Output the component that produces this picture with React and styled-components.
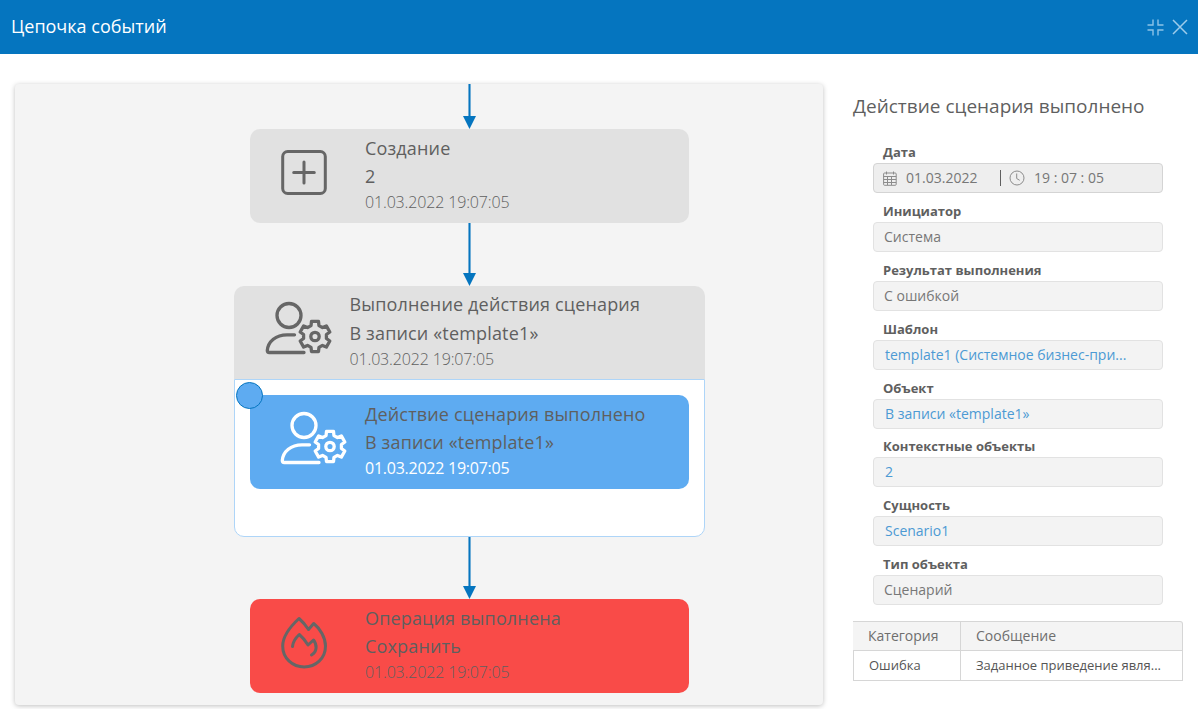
import React from "react";
import styled, { createGlobalStyle } from "styled-components";

const GlobalStyle = createGlobalStyle`
  *, *::before, *::after { box-sizing: border-box; }
  body {
    margin: 0;
    background: #fff;
    color: #5f5f5f;
    font-family: "Open Sans", "Noto Sans", sans-serif;
    overflow: hidden;
  }
`;

const Window = styled.div`
  display: flex;
  flex-direction: column;
  width: 1198px;
  height: 709px;
`;

const TitleBar = styled.header`
  display: flex;
  align-items: center;
  flex: none;
  height: 54px;
  padding: 0 10px 0 11px;
  background: #0575bf;
  color: #fff;
`;

const WindowTitle = styled.h1`
  flex: 1;
  margin: 0;
  padding-bottom: 2px;
  font-size: 18px;
  line-height: 26px;
  font-weight: 400;
`;

const WindowTools = styled.div`
  display: flex;
  align-items: center;
  gap: 8px;
  svg { display: block; }
`;

const Body = styled.main`
  display: flex;
  flex: 1;
  min-height: 0;
  padding: 29px 15px 4px;
  gap: 30px;
`;

const Canvas = styled.section`
  display: flex;
  flex-direction: column;
  align-items: center;
  flex: none;
  width: 808px;
  height: 621px;
  margin-top: 1px;
  padding-left: 101px;
  border-radius: 4px;
  background: #f4f4f4;
  box-shadow: 0 1px 5px rgba(0, 0, 0, 0.25);
`;

const Connector = styled.div`
  display: flex;
  flex-direction: column;
  align-items: center;
  flex: none;
  height: ${(p) => p.$length}px;
  &::before {
    content: "";
    flex: 1;
    width: 3px;
    border: solid rgba(5, 117, 191, 0.55);
    border-width: 0 1px;
    background: #0575bf;
    background-clip: padding-box;
  }
  &::after {
    content: "";
    width: 13px;
    height: 13px;
    background: #0575bf;
    clip-path: polygon(0 0, 100% 0, 50% 100%);
  }
`;

const tones = {
  plain: { bg: "#e1e1e1", icon: "#666", date: "#5f5f5f", weight: 300, spacing: -0.15 },
  active: { bg: "#5eabf1", icon: "#fff", date: "#fff", weight: 400, spacing: -0.25 },
  error: { bg: "#f94b48", icon: "#666", date: "#5f5f5f", weight: 300, spacing: -0.15 },
};

const Node = styled.article`
  display: flex;
  flex: none;
  width: ${(p) => (p.$header ? 471 : 439)}px;
  height: ${(p) => (p.$header ? 93 : 94)}px;
  padding: ${(p) => (p.$header ? "4px 0 0 25.5px" : "5px 0 0 25px")};
  border-radius: ${(p) => (p.$header ? "10px 10px 0 0" : "10px")};
  background: ${(p) => tones[p.$tone].bg};
  color: ${(p) => tones[p.$tone].icon};
`;

const NodeIcon = styled.div`
  flex: none;
  width: 90px;
  padding-top: 5px;
  svg { display: block; }
`;

const NodeText = styled.div`
  color: #5f5f5f;
  white-space: nowrap;
`;

const NodeLine = styled.div`
  font-size: 18px;
  line-height: 28px;
  letter-spacing: 0.16px;
  margin-top: ${(p) => (p.$spaced ? 1 : 0)}px;
`;

const NodeDate = styled.time`
  display: block;
  font-size: 16px;
  line-height: 25px;
  letter-spacing: ${(p) => tones[p.$tone].spacing}px;
  font-weight: ${(p) => tones[p.$tone].weight};
  color: ${(p) => tones[p.$tone].date};
`;

const Group = styled.div`
  flex: none;
  width: 471px;
  height: 251px;
`;

const GroupBody = styled.div`
  position: relative;
  height: 158px;
  padding: 15px 15px 0;
  border: 1px solid #aed5f8;
  border-radius: 0 0 10px 10px;
  background: #fff;
`;

const Marker = styled.span`
  position: absolute;
  left: 1px;
  top: 2px;
  width: 27px;
  height: 27px;
  border: 1px solid #0575bf;
  border-radius: 50%;
  background: #5eabf1;
`;

const Details = styled.aside`
  display: flex;
  flex-direction: column;
  width: 330px;
`;

const DetailsTitle = styled.h2`
  flex: none;
  height: 60px;
  margin: 0;
  padding-top: 9px;
  font-size: 19px;
  line-height: 28px;
  font-weight: 400;
  white-space: nowrap;
`;

const FieldList = styled.div`
  display: flex;
  flex-direction: column;
  padding: 0 20px;
`;

const Field = styled.div`
  flex: none;
  height: 58.88px;
`;

const Label = styled.div`
  height: 20px;
  padding-left: 10px;
  font-size: 13px;
  line-height: 19px;
  font-weight: 700;
`;

const Value = styled.div`
  display: flex;
  align-items: center;
  height: 30px;
  padding: 0 ${(p) => (p.$link ? 11 : p.$date ? 9 : 10)}px;
  border: 1px solid ${(p) => (p.$date ? "#d4d4d4" : "#e2e2e2")};
  border-radius: 4px;
  background: ${(p) => (p.$date ? "#eee" : "#f3f3f3")};
  color: ${(p) => (p.$link ? "#4c9ad4" : "#777")};
  font-size: 14px;
  line-height: 20px;
  white-space: nowrap;
`;

const DateText = styled.span`
  width: 94px;
  margin-left: 9px;
`;

const TimeText = styled.span`
  margin-left: 9px;
`;

const Divider = styled.span`
  width: 1px;
  height: 16px;
  margin-right: 8px;
  background: #5f5f5f;
`;

const Table = styled.div`
  display: grid;
  grid-template-columns: 108px 222px;
  margin-top: 6.9px;
`;

const Cell = styled.div`
  height: 30px;
  padding-left: 15px;
  border: solid #d6d6d6;
  border-width: ${(p) => (p.$head ? "1px 1px 1px 0" : "0 1px 1px 0")};
  border-left-width: ${(p) => (p.$first && !p.$head ? "1px" : "0")};
  border-top-right-radius: ${(p) => (p.$head && !p.$first ? "3px" : "0")};
  background: ${(p) => (p.$head ? "#f4f4f4" : "#fff")};
  font-size: ${(p) => (p.$head ? 14 : 13)}px;
  line-height: ${(p) => (p.$head ? 28 : 29)}px;
  color: ${(p) => (p.$head ? "#6e6e6e" : "#555")};
  white-space: nowrap;
`;

const PlusIcon = () => (
  <svg width="80" height="70" viewBox="0 0 80 70" fill="none" stroke="currentColor" strokeWidth="3" strokeLinecap="round">
    <rect x="7.7" y="12.5" width="42.6" height="42" rx="5" />
    <path d="M29 23v21M18.7 33.5h20.6" />
  </svg>
);

const gearPath = (cx, cy, outer, inner) => {
  const points = [];
  for (let i = 0; i < 6; i += 1) {
    [[-20, inner], [-13, outer], [13, outer], [20, inner]].forEach(([offset, r]) => {
      const a = ((i * 60 - 90 + offset) * Math.PI) / 180;
      points.push(`${(cx + r * Math.cos(a)).toFixed(2)} ${(cy + r * Math.sin(a)).toFixed(2)}`);
    });
  }
  return `M${points.join("L")}Z`;
};

const UserGearIcon = () => (
  <svg width="80" height="70" viewBox="0 0 80 70" fill="none" stroke="currentColor" strokeWidth="3.3" strokeLinecap="round" strokeLinejoin="round">
    <circle cx="29" cy="20.5" r="12" />
    <path d="M34.5 39.8H27C16 39.8 8 46.5 7.3 55.5Q7.3 57.5 9.3 57.5H44" />
    <path d={gearPath(55, 41.5, 15.5, 11.6)} />
    <circle cx="55" cy="41.5" r="4.2" />
  </svg>
);

const FlameIcon = () => (
  <svg width="80" height="70" viewBox="0 0 80 70" fill="none" stroke="currentColor" strokeWidth="3" strokeLinecap="round" strokeLinejoin="round">
    <path d="M24 9.5C17 16 7.7 26.5 7.7 37C7.7 49.5 17.7 58 29.2 58S50.5 49.5 50.5 37C50.5 28.5 45 19.5 38.7 14.5L33.5 20.5C30.5 16 27.5 12.5 24 9.5Z" />
    <path d="M17.5 37.5C18 32.5 20.5 29 24.3 25.5C28 28.5 30.5 32 33 36L38.5 31C42 35.5 42.5 42.5 36.5 46" />
  </svg>
);

const CollapseIcon = () => (
  <svg width="17" height="17" viewBox="0 0 17 17" fill="none" stroke="#8cc3e8" strokeWidth="1.4">
    <path d="M6 .5V6H.5M11 .5V6h5.5M6 16.5V11H.5M11 16.5V11h5.5" />
  </svg>
);

const CloseIcon = () => (
  <svg width="16" height="16" viewBox="0 0 16 16" fill="none" stroke="#9dcbea" strokeWidth="1.5">
    <path d="M1 1l14 14M15 1L1 15" />
  </svg>
);

const CalendarIcon = () => (
  <svg width="14" height="15" viewBox="0 0 14 15" fill="none" stroke="#8c8c8c">
    <rect x=".6" y="2" width="12.6" height="12.3" rx="1" />
    <path d="M.6 5.5h12.6M.6 8.5h12.6M.6 11.5h12.6M4.5 5.5v8.5M8.5 5.5v8.5M3.5.5v3M10.5.5v3" />
  </svg>
);

const ClockIcon = () => (
  <svg width="16" height="16" viewBox="0 0 16 16" fill="none" stroke="#8c8c8c">
    <circle cx="8" cy="8" r="7" />
    <path d="M7.7 3.5v5l3 1.8" />
  </svg>
);

const EventNode = ({ tone = "plain", header, icon, title, subject }) => (
  <Node $tone={tone} $header={header}>
    <NodeIcon>{icon}</NodeIcon>
    <NodeText>
      <NodeLine>{title}</NodeLine>
      <NodeLine $spaced={header}>{subject}</NodeLine>
      <NodeDate $tone={tone}>01.03.2022 19:07:05</NodeDate>
    </NodeText>
  </Node>
);

const fields = [
  { label: "Инициатор", value: "Система" },
  { label: "Результат выполнения", value: "С ошибкой" },
  { label: "Шаблон", value: "template1 (Системное бизнес-при...", link: true },
  { label: "Объект", value: "В записи «template1»", link: true },
  { label: "Контекстные объекты", value: "2", link: true },
  { label: "Сущность", value: "Scenario1", link: true },
  { label: "Тип объекта", value: "Сценарий" },
];

export default function App() {
  return (
    <Window>
      <GlobalStyle />
      <TitleBar>
        <WindowTitle>Цепочка событий</WindowTitle>
        <WindowTools>
          <CollapseIcon />
          <CloseIcon />
        </WindowTools>
      </TitleBar>
      <Body>
        <Canvas>
          <Connector $length={45} />
          <EventNode icon={<PlusIcon />} title="Создание" subject="2" />
          <Connector $length={63} />
          <Group>
            <EventNode header icon={<UserGearIcon />} title="Выполнение действия сценария" subject="В записи «template1»" />
            <GroupBody>
              <EventNode tone="active" icon={<UserGearIcon />} title="Действие сценария выполнено" subject="В записи «template1»" />
              <Marker />
            </GroupBody>
          </Group>
          <Connector $length={62} />
          <EventNode tone="error" icon={<FlameIcon />} title="Операция выполнена" subject="Сохранить" />
        </Canvas>
        <Details>
          <DetailsTitle>Действие сценария выполнено</DetailsTitle>
          <FieldList>
            <Field>
              <Label>Дата</Label>
              <Value $date>
                <CalendarIcon />
                <DateText>01.03.2022</DateText>
                <Divider />
                <ClockIcon />
                <TimeText>19 : 07 : 05</TimeText>
              </Value>
            </Field>
            {fields.map((f) => (
              <Field key={f.label}>
                <Label>{f.label}</Label>
                <Value $link={f.link}>{f.value}</Value>
              </Field>
            ))}
          </FieldList>
          <Table>
            <Cell $head $first>Категория</Cell>
            <Cell $head>Сообщение</Cell>
            <Cell $first>Ошибка</Cell>
            <Cell>Заданное приведение явля...</Cell>
          </Table>
        </Details>
      </Body>
    </Window>
  );
}
